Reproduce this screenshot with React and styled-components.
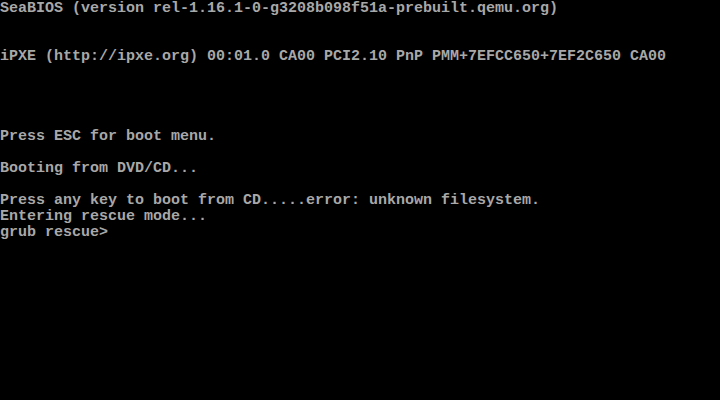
import React from 'react';
import styled, { createGlobalStyle } from 'styled-components';

const GlobalStyle = createGlobalStyle`
  html, body {
    margin: 0;
    padding: 0;
    background: #000000;
  }
`;

const Screen = styled.div`
  box-sizing: border-box;
  width: 720px;
  height: 400px;
  padding-top: 1px;
  background: #000000;
  color: #a8a8a8;
  font-family: 'Liberation Mono', 'DejaVu Sans Mono', monospace;
  font-size: 15px;
  font-weight: bold;
  overflow: hidden;
  display: grid;
  grid-template-rows: repeat(25, 16px);
`;

const Row = styled.div`
  height: 16px;
  line-height: 16px;
  white-space: pre;
`;

const lines = [
  'SeaBIOS (version rel-1.16.1-0-g3208b098f51a-prebuilt.qemu.org)',
  '',
  '',
  'iPXE (http://ipxe.org) 00:01.0 CA00 PCI2.10 PnP PMM+7EFCC650+7EF2C650 CA00',
  '',
  '',
  '',
  '',
  'Press ESC for boot menu.',
  '',
  'Booting from DVD/CD...',
  '',
  'Press any key to boot from CD.....error: unknown filesystem.',
  'Entering rescue mode...',
  'grub rescue>',
];

const App = () => {
  return (
    <>
      <GlobalStyle />
      <Screen>
        {lines.map((line, i) => (
          <Row key={i}>{line || ' '}</Row>
        ))}
      </Screen>
    </>
  );
};

export default App;
